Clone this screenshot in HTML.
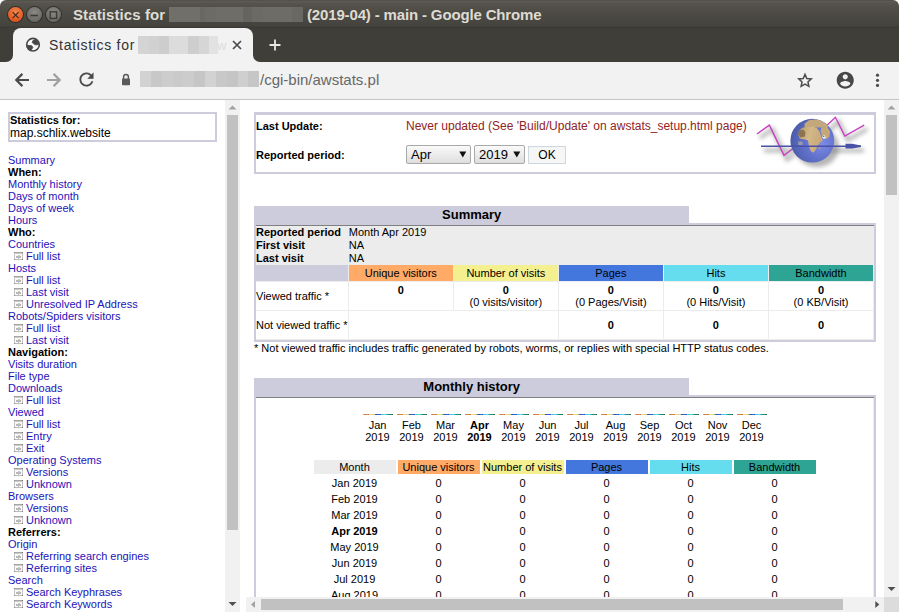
<!DOCTYPE html>
<html><head><meta charset="utf-8">
<style>
html,body{margin:0;padding:0;width:899px;height:612px;overflow:hidden;background:#fff;font-family:"Liberation Sans",sans-serif}
.abs{position:absolute}
.wb{width:15px;height:15px;border-radius:50%;box-shadow:0 0 0 1px #2f2e2a}
.ttl{font:bold 15px "Liberation Sans",sans-serif;color:#dfdbd2;letter-spacing:-0.15px;white-space:nowrap;line-height:18px}
.tabt{font:14px "Liberation Sans",sans-serif;color:#333333;letter-spacing:0.7px;white-space:nowrap;line-height:18px}
.urlt{font:15px "Liberation Sans",sans-serif;color:#676767;white-space:nowrap;line-height:18px}
#lframe{left:0;top:100px;width:225px;height:512px;overflow:hidden;background:#fff}
#mframe{left:246px;top:100px;width:638px;height:497px;overflow:hidden;background:#fff}
.sbt{background:#f1f1f1}
.thumb{background:#c1c1c1;position:absolute}
.aw{font:11px "Liberation Sans",sans-serif;color:#000}
.aw a{font:11px "Liberation Sans",sans-serif;color:#2412b8;text-decoration:none}
.aw table{font:11px "Liberation Sans",sans-serif}
.aws_border{border-collapse:collapse;background-color:#CCCCDD;padding:1px;margin:0}
.aws_title{font:bold 13px "Liberation Sans",sans-serif!important;background-color:#CCCCDD;text-align:center;padding:1px!important;color:#000}
.aws_blank{font:13px "Liberation Sans",sans-serif!important;background-color:#FFFFFF;text-align:center;padding:1px!important}
.aws_data{background-color:#FFFFFF;border-top-width:1px;border-left-width:0;border-right-width:0;border-bottom-width:0}
.aw td{border-color:#ECECEC;border-left-width:0;border-right-width:1px;border-top-width:0;border-bottom-width:1px;font:11px "Liberation Sans",sans-serif;text-align:center;color:#000}
.aw td.aws{text-align:left;padding:0}
.aw td.awsm{border-width:0;text-align:left;padding:0}
.sp{display:inline-block;width:6px}
.ic{display:inline-block;width:9px;height:8px;vertical-align:baseline;margin-right:3px}
.vu,.vv,.vp,.vh,.vk{display:inline-block;width:6px;height:1px;vertical-align:bottom}
.vu{background:linear-gradient(90deg,#f0a060,#d07030,#e09050,#c06020)}
.vv{background:linear-gradient(90deg,#f0f0a0,#d8d080,#e0e090,#c0b060)}
.vp{background:linear-gradient(90deg,#3070f0,#2050c0,#4070e0,#2040a0)}
.vh{background:linear-gradient(90deg,#50e0f0,#30c0d0,#60e0f0,#20b0c0)}
.vk{background:linear-gradient(90deg,#30b090,#208060,#209070,#106030)}
.sel{position:absolute;height:17px;border:1px solid #a9a9a9;border-radius:2px;background:linear-gradient(#fafafa,#dedede);font:13px "Liberation Sans",sans-serif;line-height:17px;color:#000}
.btn{position:absolute;height:16px;border:1px solid #ccd7e0;background:#f6f6f6;font:12px "Liberation Sans",sans-serif;line-height:16px;text-align:center;color:#000}

</style></head><body>
<svg width="0" height="0" style="position:absolute"><defs>
<g id="pg" shape-rendering="crispEdges"><rect x="0" y="0" width="9" height="8" fill="#c4c4c4"/><rect x="1" y="2" width="7" height="5" fill="#fafafa"/><rect x="1" y="0" width="7" height="1" fill="#a8a8a8"/><rect x="1" y="1" width="7" height="1" fill="#cacaca"/><rect x="0" y="0" width="1" height="1" fill="#8a8a8a"/><rect x="8" y="0" width="1" height="1" fill="#7a7a7a"/><rect x="0" y="7" width="1" height="1" fill="#909090"/><rect x="8" y="7" width="1" height="1" fill="#808080"/><rect x="1" y="7" width="7" height="1" fill="#bcbcbc"/><rect x="2" y="4" width="5" height="2" fill="#b8b8b8"/><rect x="4" y="3" width="2" height="1" fill="#c8c8c8"/><rect x="4" y="6" width="1" height="1" fill="#c8c8c8"/></g>
</defs></svg>
<div class="abs" style="left:0;top:0;width:899px;height:62px;background:linear-gradient(#4c4a45 0px,#5d5a53 1px,#5b5851 2px,#55524b 4px,#4c4a44 14px,#45433e 26px,#3b3a35 27px,#3b3a35 28px,#3f3e39 29px,#3f3e39 60px,#363531 61px);border-radius:6px 6px 0 0"></div>

<!-- window buttons -->
<div class="abs wb" style="left:8px;top:7px;background:radial-gradient(circle at 50% 35%,#f4884e,#e0561e 70%,#c94816);"></div>
<div class="abs wb" style="left:27px;top:7px;background:radial-gradient(circle at 50% 35%,#8a8984,#6b6a65 70%,#5c5b57);"></div>
<div class="abs wb" style="left:46px;top:7px;background:radial-gradient(circle at 50% 35%,#8a8984,#6b6a65 70%,#5c5b57);"></div>
<svg class="abs" style="left:0;top:1px" width="70" height="28">
<path d="M12.6 11.2 L18.6 17.2 M18.6 11.2 L12.6 17.2" stroke="#3a2a20" stroke-width="1.2"/>
<path d="M30.5 14.5 H38" stroke="#3c3b37" stroke-width="1.6"/>
<rect x="50.2" y="10.8" width="6.4" height="6.6" fill="none" stroke="#3c3b37" stroke-width="1.4"/>
</svg>
<div class="abs ttl" style="left:73px;top:6px;letter-spacing:0.1px">Statistics for</div>
<div class="abs" style="left:169px;top:7px;width:134px;height:15px;background:linear-gradient(90deg,#716f69 0px,#716f69 31px,#6a6863 31px,#6a6863 36px,#6d6b66 36px,#6d6b66 47px,#6f6d67 47px,#6f6d67 74px,#66645f 74px,#66645f 83px,#6c6a65 83px,#6c6a65 94px,#6e6c66 94px,#6e6c66 123px,#6a6862 123px,#6a6862 134px)"></div>
<div class="abs ttl" style="left:307px;top:6px">(2019-04) - main - Google Chrome</div>
<!-- tab -->
<div class="abs" style="left:6px;top:54px;width:254px;height:8px;background:#f2f2f2"></div>
<div class="abs" style="left:0;top:28px;width:13px;height:34px;background:#3f3e39;border-bottom-right-radius:7px"></div>
<div class="abs" style="left:253px;top:28px;width:646px;height:34px;background:#3f3e39;border-bottom-left-radius:7px"></div>
<div class="abs" style="left:0;top:62px;width:899px;height:1px;background:#fbfbfb"></div>
<div class="abs" style="left:13px;top:28px;width:240px;height:34px;background:#f2f2f2;border-radius:8px 8px 0 0"></div>
<svg class="abs" style="left:20px;top:32px" width="30" height="24" viewBox="20 32 30 24">
<circle cx="33" cy="44.7" r="6.3" fill="#fafafa" stroke="#474747" stroke-width="1.6"/>
<path d="M32.2,42.6 L32.9,40.6 L35.7,39.2 L38.6,41.8 L38.4,44.5 L35.7,44.9 L33.7,43.8Z" fill="#474747" stroke="#474747" stroke-width="0.8" stroke-linejoin="round"/>
<path d="M27.2,45.3 L31.8,45.7 L32.9,47.3 L31.8,49.3 L31,50.8 L28.6,49.8 L27,47.3Z" fill="#474747" stroke="#474747" stroke-width="0.8" stroke-linejoin="round"/>
</svg>
<div class="abs tabt" style="left:49px;top:36px">Statistics for</div>
<div class="abs" style="left:138px;top:36px;width:80px;height:18px;background:linear-gradient(90deg,#d4d4d4 0px,#d4d4d4 11px,#d1d1d1 11px,#d1d1d1 21px,#cdcdcd 21px,#cdcdcd 31px,#dcdcdc 31px,#dcdcdc 50px,#cecece 50px,#cecece 61px,#d6d6d6 61px,#d6d6d6 71px,#e2e2e2 71px,#e2e2e2 80px)"></div>
<div class="abs" style="left:217px;top:38px;font:13px 'Liberation Sans',sans-serif;color:#dcdcdc;line-height:16px">w</div>
<svg class="abs" style="left:230px;top:38px" width="14" height="14"><path d="M3 3 L11 11 M11 3 L3 11" stroke="#4a4a4a" stroke-width="1.7"/></svg>
<svg class="abs" style="left:268px;top:38px" width="14" height="14"><path d="M7 1.5 V12.5 M1.5 7 H12.5" stroke="#e8e8e4" stroke-width="1.8"/></svg>
<!-- toolbar -->
<div class="abs" style="left:0;top:62px;width:899px;height:37px;background:#f2f2f2"></div>
<div class="abs" style="left:0;top:99px;width:899px;height:1px;background:#c6c6c6"></div>
<svg class="abs" style="left:0;top:62px" width="100" height="37" viewBox="0 62 100 37">
<path d="M29 80 H16.6 M22.4 73.9 L16.3 80 L22.4 86.1" fill="none" stroke="#4a4a4a" stroke-width="2.2"/>
<path d="M47 80 H59.4 M53.6 73.9 L59.7 80 L53.6 86.1" fill="none" stroke="#a0a0a0" stroke-width="2.2"/>
</svg>
<svg class="abs" style="left:75.5px;top:69px" width="21" height="21" viewBox="0 0 24 24"><path fill="#4a4a4a" stroke="#4a4a4a" stroke-width="0.1" d="M17.65 6.35C16.2 4.9 14.21 4 12 4c-4.42 0-7.990 3.58-7.990 8s3.570 8 7.990 8c3.73 0 6.84-2.55 7.73-6h-2.08c-.82 2.33-3.04 4-5.65 4-3.31 0-6-2.690-6-6s2.690-6 6-6c1.66 0 3.14.69 4.22 1.78L13 11h7V4l-2.35 2.35z"/></svg>
<svg class="abs" style="left:0;top:62px" width="140" height="37">
<path d="M123.6 17 V14.8 A2.4 2.4 0 0 1 128.4 14.8 V17" fill="none" stroke="#5a5a5a" stroke-width="1.5"/>
<rect x="122" y="16.6" width="8" height="6.6" rx="0.8" fill="#5a5a5a"/>
</svg>
<div class="abs" style="left:140px;top:71px;width:119px;height:16px;background:linear-gradient(90deg,#d2d2d2 0px,#d2d2d2 11px,#c8c8c8 11px,#c8c8c8 22px,#cdcdcd 22px,#cdcdcd 33px,#cacaca 33px,#cacaca 43px,#cccccc 43px,#cccccc 54px,#c6c6c6 54px,#c6c6c6 65px,#d2d2d2 65px,#d2d2d2 76px,#c8c8c8 76px,#c8c8c8 87px,#c5c5c5 87px,#c5c5c5 98px,#cfcfcf 98px,#cfcfcf 108px,#c6c6c6 108px,#c6c6c6 119px)"></div>
<div class="abs urlt" style="left:260px;top:71px">/cgi-bin/awstats.pl</div>
<svg class="abs" style="left:790px;top:62px" width="100" height="37">
<path d="M15.00 12.35 L16.82 16.44 L21.28 16.91 L17.95 19.91 L18.88 24.29 L15.00 22.05 L11.12 24.29 L12.05 19.91 L8.72 16.91 L13.18 16.44Z" fill="none" stroke="#4d4d4d" stroke-width="1.5" stroke-linejoin="miter"/>
<circle cx="87.5" cy="13.2" r="1.6" fill="#4d4d4d"/>
<circle cx="87.5" cy="18.3" r="1.6" fill="#4d4d4d"/>
<circle cx="87.5" cy="23.4" r="1.6" fill="#4d4d4d"/>
</svg>
<svg class="abs" style="left:834.9px;top:69.6px" width="20.5" height="20.5" viewBox="0 0 24 24"><path fill="#474747" d="M12 2C6.48 2 2 6.48 2 12s4.48 10 10 10 10-4.48 10-10S17.52 2 12 2zm0 3c1.66 0 3 1.34 3 3s-1.34 3-3 3-3-1.34-3-3 1.34-3 3-3zm0 14.2c-2.5 0-4.71-1.28-6-3.22.03-1.99 4-3.08 6-3.08 1.99 0 5.97 1.09 6 3.08-1.29 1.94-3.5 3.22-6 3.22z"/></svg>

<div id="lframe" class="abs aw">
<div style="margin:12px 8px 0 8px">
<table class="aws_border" border="0" cellpadding="2" cellspacing="0" width="100%"><tr><td class="aws" style="background:#fff;padding:0;border:2px solid #ccccdd"><b>Statistics for:</b><br><span style="font-size:12px">map.schlix.website</span></td></tr></table>
<br>
<a>Summary</a><br>
<b>When:</b><br>
<a>Monthly history</a><br>
<a>Days of month</a><br>
<a>Days of week</a><br>
<a>Hours</a><br>
<b>Who:</b><br>
<a>Countries</a><br>
<span class="sp"></span><svg class="ic" width="9" height="8" viewBox="0 0 9 8"><use href="#pg"/></svg><a class="sa">Full list</a><br>
<a>Hosts</a><br>
<span class="sp"></span><svg class="ic" width="9" height="8" viewBox="0 0 9 8"><use href="#pg"/></svg><a class="sa">Full list</a><br>
<span class="sp"></span><svg class="ic" width="9" height="8" viewBox="0 0 9 8"><use href="#pg"/></svg><a class="sa">Last visit</a><br>
<span class="sp"></span><svg class="ic" width="9" height="8" viewBox="0 0 9 8"><use href="#pg"/></svg><a class="sa">Unresolved IP Address</a><br>
<a>Robots/Spiders visitors</a><br>
<span class="sp"></span><svg class="ic" width="9" height="8" viewBox="0 0 9 8"><use href="#pg"/></svg><a class="sa">Full list</a><br>
<span class="sp"></span><svg class="ic" width="9" height="8" viewBox="0 0 9 8"><use href="#pg"/></svg><a class="sa">Last visit</a><br>
<b>Navigation:</b><br>
<a>Visits duration</a><br>
<a>File type</a><br>
<a>Downloads</a><br>
<span class="sp"></span><svg class="ic" width="9" height="8" viewBox="0 0 9 8"><use href="#pg"/></svg><a class="sa">Full list</a><br>
<a>Viewed</a><br>
<span class="sp"></span><svg class="ic" width="9" height="8" viewBox="0 0 9 8"><use href="#pg"/></svg><a class="sa">Full list</a><br>
<span class="sp"></span><svg class="ic" width="9" height="8" viewBox="0 0 9 8"><use href="#pg"/></svg><a class="sa">Entry</a><br>
<span class="sp"></span><svg class="ic" width="9" height="8" viewBox="0 0 9 8"><use href="#pg"/></svg><a class="sa">Exit</a><br>
<a>Operating Systems</a><br>
<span class="sp"></span><svg class="ic" width="9" height="8" viewBox="0 0 9 8"><use href="#pg"/></svg><a class="sa">Versions</a><br>
<span class="sp"></span><svg class="ic" width="9" height="8" viewBox="0 0 9 8"><use href="#pg"/></svg><a class="sa">Unknown</a><br>
<a>Browsers</a><br>
<span class="sp"></span><svg class="ic" width="9" height="8" viewBox="0 0 9 8"><use href="#pg"/></svg><a class="sa">Versions</a><br>
<span class="sp"></span><svg class="ic" width="9" height="8" viewBox="0 0 9 8"><use href="#pg"/></svg><a class="sa">Unknown</a><br>
<b>Referrers:</b><br>
<a>Origin</a><br>
<span class="sp"></span><svg class="ic" width="9" height="8" viewBox="0 0 9 8"><use href="#pg"/></svg><a class="sa">Referring search engines</a><br>
<span class="sp"></span><svg class="ic" width="9" height="8" viewBox="0 0 9 8"><use href="#pg"/></svg><a class="sa">Referring sites</a><br>
<a>Search</a><br>
<span class="sp"></span><svg class="ic" width="9" height="8" viewBox="0 0 9 8"><use href="#pg"/></svg><a class="sa">Search Keyphrases</a><br>
<span class="sp"></span><svg class="ic" width="9" height="8" viewBox="0 0 9 8"><use href="#pg"/></svg><a class="sa">Search Keywords</a><br>
<b>Others:</b><br>
<a>Miscellaneous</a><br>
<a>HTTP Status codes</a><br>
<span class="sp"></span><svg class="ic" width="9" height="8" viewBox="0 0 9 8"><use href="#pg"/></svg><a class="sa">Pages not found</a><br>
</div>
</div>
<div class="abs sbt" style="left:225px;top:100px;width:15px;height:512px"></div>
<div class="thumb" style="left:227px;top:115px;width:11px;height:415px"></div>
<svg class="abs" style="left:225px;top:100px" width="15" height="512"><path d="M3.5 9.5 L7.5 5.5 L11.5 9.5Z" fill="#a3a3a3"/><path d="M3.5 502 L7.5 506 L11.5 502Z" fill="#505050"/></svg>

<div id="mframe" class="abs aw">
<div style="margin:0 8px">
<a>&nbsp;</a>
<form style="padding:0 0 20px 0;margin:0">
<table class="aws_border" border="0" cellpadding="2" cellspacing="0" width="100%">
<tr><td style="padding:3px 2px 2px 2px">
<table class="aws_data" border="0" cellpadding="1" cellspacing="0" width="100%">
<tr valign="middle"><td class="aws" valign="middle" width="150" style="height:22px"><b>Last Update:</b>&nbsp;</td><td class="aws" valign="middle"><span style="font-size:12px;color:#902424">Never updated (See 'Build/Update' on awstats_setup.html page)</span></td><td align="right" rowspan="2" style="width:120px"></td></tr>
<tr><td class="aws" valign="middle" style="height:35px"><b>Reported period:</b></td><td class="aws" valign="middle"></td></tr>
</table>
</td></tr></table>
</form>
<a>&nbsp;</a>
<table class="aws_border" border="0" cellpadding="2" cellspacing="0" width="100%">
<tr><td class="aws_title" width="70%">Summary </td><td class="aws_blank">&nbsp;</td></tr>
<tr><td colspan="2">
<table class="aws_data" border="1" cellpadding="2" cellspacing="0" width="100%">
<tr bgcolor="#ECECEC"><td class="aws"><b>Reported period</b></td><td class="aws" colspan="5">Month Apr 2019</td></tr>
<tr bgcolor="#ECECEC"><td class="aws"><b>First visit</b></td><td class="aws" colspan="5">NA</td></tr>
<tr bgcolor="#ECECEC"><td class="aws"><b>Last visit</b></td><td class="aws" colspan="5">NA</td></tr>
<tr><td bgcolor="#CCCCDD">&nbsp;</td><td width="17%" bgcolor="#FFAA66">Unique visitors</td><td width="17%" bgcolor="#F4F090">Number of visits</td><td width="17%" bgcolor="#4477DD">Pages</td><td width="17%" bgcolor="#66DDEE">Hits</td><td width="17%" bgcolor="#2EA495">Bandwidth</td></tr>
<tr><td class="aws">Viewed traffic&nbsp;*</td><td><b>0</b><br>&nbsp;</td><td><b>0</b><br>(0&nbsp;visits/visitor)</td><td><b>0</b><br>(0&nbsp;Pages/Visit)</td><td><b>0</b><br>(0&nbsp;Hits/Visit)</td><td><b>0</b><br>(0&nbsp;KB/Visit)</td></tr>
<tr><td class="aws">Not viewed traffic&nbsp;*</td><td colspan="2">&nbsp;<br>&nbsp;</td><td><b>0</b><br></td><td><b>0</b><br></td><td><b>0</b><br></td></tr>
</table></td></tr></table>
<span>* Not viewed traffic includes traffic generated by robots, worms, or replies with special HTTP status codes.</span><br>
<br>
<a>&nbsp;</a>
<table class="aws_border" border="0" cellpadding="2" cellspacing="0" width="100%">
<tr><td class="aws_title" width="70%">Monthly history </td><td class="aws_blank">&nbsp;</td></tr>
<tr><td colspan="2">
<table class="aws_data" border="1" cellpadding="2" cellspacing="0" width="100%">
<tr><td align="center">
<center>
<table>
<tr valign="bottom"><td>&nbsp;</td><td><i class="vu"></i><i class="vv"></i><i class="vp"></i><i class="vh"></i><i class="vk"></i></td><td><i class="vu"></i><i class="vv"></i><i class="vp"></i><i class="vh"></i><i class="vk"></i></td><td><i class="vu"></i><i class="vv"></i><i class="vp"></i><i class="vh"></i><i class="vk"></i></td><td><i class="vu"></i><i class="vv"></i><i class="vp"></i><i class="vh"></i><i class="vk"></i></td><td><i class="vu"></i><i class="vv"></i><i class="vp"></i><i class="vh"></i><i class="vk"></i></td><td><i class="vu"></i><i class="vv"></i><i class="vp"></i><i class="vh"></i><i class="vk"></i></td><td><i class="vu"></i><i class="vv"></i><i class="vp"></i><i class="vh"></i><i class="vk"></i></td><td><i class="vu"></i><i class="vv"></i><i class="vp"></i><i class="vh"></i><i class="vk"></i></td><td><i class="vu"></i><i class="vv"></i><i class="vp"></i><i class="vh"></i><i class="vk"></i></td><td><i class="vu"></i><i class="vv"></i><i class="vp"></i><i class="vh"></i><i class="vk"></i></td><td><i class="vu"></i><i class="vv"></i><i class="vp"></i><i class="vh"></i><i class="vk"></i></td><td><i class="vu"></i><i class="vv"></i><i class="vp"></i><i class="vh"></i><i class="vk"></i></td><td>&nbsp;</td></tr>
<tr valign="middle"><td>&nbsp;</td><td>Jan<br>2019</td><td>Feb<br>2019</td><td>Mar<br>2019</td><td><b>Apr<br>2019</b></td><td>May<br>2019</td><td>Jun<br>2019</td><td>Jul<br>2019</td><td>Aug<br>2019</td><td>Sep<br>2019</td><td>Oct<br>2019</td><td>Nov<br>2019</td><td>Dec<br>2019</td><td>&nbsp;</td></tr>
</table>
<br>
<table>
<tr><td width="80" bgcolor="#ECECEC">Month</td><td width="80" bgcolor="#FFAA66">Unique visitors</td><td width="80" bgcolor="#F4F090">Number of visits</td><td width="80" bgcolor="#4477DD">Pages</td><td width="80" bgcolor="#66DDEE">Hits</td><td width="80" bgcolor="#2EA495">Bandwidth</td></tr>
<tr><td>Jan 2019</td><td>0</td><td>0</td><td>0</td><td>0</td><td>0</td></tr><tr><td>Feb 2019</td><td>0</td><td>0</td><td>0</td><td>0</td><td>0</td></tr><tr><td>Mar 2019</td><td>0</td><td>0</td><td>0</td><td>0</td><td>0</td></tr><tr><td><b>Apr 2019</b></td><td>0</td><td>0</td><td>0</td><td>0</td><td>0</td></tr><tr><td>May 2019</td><td>0</td><td>0</td><td>0</td><td>0</td><td>0</td></tr><tr><td>Jun 2019</td><td>0</td><td>0</td><td>0</td><td>0</td><td>0</td></tr><tr><td>Jul 2019</td><td>0</td><td>0</td><td>0</td><td>0</td><td>0</td></tr><tr><td>Aug 2019</td><td>0</td><td>0</td><td>0</td><td>0</td><td>0</td></tr><tr><td>Sep 2019</td><td>0</td><td>0</td><td>0</td><td>0</td><td>0</td></tr><tr><td>Oct 2019</td><td>0</td><td>0</td><td>0</td><td>0</td><td>0</td></tr><tr><td>Nov 2019</td><td>0</td><td>0</td><td>0</td><td>0</td><td>0</td></tr><tr><td>Dec 2019</td><td>0</td><td>0</td><td>0</td><td>0</td><td>0</td></tr>
</table>
</center>
</td></tr></table></td></tr></table>
</div>
</div>
<!-- form controls -->
<div class="sel" style="left:406px;top:145px;width:63px"><span style="position:absolute;left:4px;top:0">Apr</span><svg style="position:absolute;left:52px;top:5px" width="8" height="7"><path d="M0.3 0.5 H7.3 L3.8 6.6Z" fill="#111"/></svg></div>
<div class="sel" style="left:474px;top:145px;width:49px"><span style="position:absolute;left:4px;top:0">2019</span><svg style="position:absolute;left:38px;top:5px" width="8" height="7"><path d="M0.3 0.5 H7.3 L3.8 6.6Z" fill="#111"/></svg></div>
<div class="btn" style="left:528px;top:146px;width:36px">OK</div>
<svg class="abs" style="left:750px;top:108px" width="120" height="66" viewBox="750 108 120 66">
<defs>
<filter id="bl" x="-30%" y="-30%" width="160%" height="160%"><feGaussianBlur stdDeviation="2"/></filter>
<radialGradient id="gg" cx="0.7" cy="0.55" r="0.8"><stop offset="0" stop-color="#7c8ce8"/><stop offset="0.45" stop-color="#6272cc"/><stop offset="0.8" stop-color="#5060b0"/><stop offset="1" stop-color="#44509a"/></radialGradient>
<linearGradient id="gl" x1="0" y1="0" x2="1" y2="0.3"><stop offset="0" stop-color="#b89868"/><stop offset="0.5" stop-color="#d4b888"/><stop offset="1" stop-color="#c8a878"/></linearGradient>
<clipPath id="gc"><circle cx="812.3" cy="140.7" r="21.9"/></clipPath>
</defs>
<g filter="url(#bl)" stroke="#8a8a8a" fill="none" stroke-width="4" opacity="0.6">
<polyline points="760,138 772.4,129.1 787,159.4 794,155"/>
<polyline points="829,131 838.4,121.3 847.8,140 867.2,129.1"/>
<line x1="764" y1="150.5" x2="864" y2="150.5"/>
</g>
<ellipse cx="817" cy="147" rx="22" ry="20" fill="#7a7a7a" opacity="0.55" filter="url(#bl)"/>
<polyline points="757,134 769.4,125.1 784,155.4 795,147" fill="none" stroke="#c840c0" stroke-width="1.4"/>
<polyline points="823,129 835.4,117.3 844.8,136 864.2,125.1" fill="none" stroke="#c840c0" stroke-width="1.4"/>
<circle cx="812.3" cy="140.7" r="21.9" fill="url(#gg)"/>
<g clip-path="url(#gc)">
<path d="M804.5,123.7 L808.9,120.2 L816,119.3 L823,121.1 L828.3,125.5 L827.4,128.1 L823,127.6 L816.9,127.6 L810.7,126.8 L804.5,127.6Z" fill="#c4a87c"/>
<path d="M804.5,127.2 L812.5,126.3 L816.9,128.1 L819.5,131.6 L821.3,136.9 L823,140.5 L820.4,142.2 L817.7,145.7 L816,149.3 L813.3,152.8 L810.7,151 L808.9,145.7 L808,140.5 L805.4,139.6 L800.1,138.7 L798.3,135.2 L799.2,130.8 L801.9,128.1Z" fill="url(#gl)"/>
<path d="M798.6,130.5 L803,129.5 L805.4,132 L805,136.5 L800.5,137.5 L798.4,135Z" fill="#8c7452"/>
<path d="M821.3,127.2 L827.4,127.2 L830.1,131.6 L829.2,136.9 L825.7,139.6 L822.2,136 L820.6,131.6Z" fill="#c4a878"/>
<ellipse cx="819.6" cy="148" rx="1" ry="1.8" fill="#b89870"/>
<path d="M798.3,141.5 L802.6,141.5 L802.6,145 L798.3,145Z" fill="#9a9aae"/>
</g>
<circle cx="824" cy="137" r="1.7" fill="#f4f4f4"/>
<circle cx="823.8" cy="136.4" r="0.7" fill="#606060"/>
<line x1="761" y1="146.2" x2="861" y2="146.2" stroke="#4a52a8" stroke-width="1.5"/>
<path d="M845.5 143.8 H852 L861 145.5 V146.9 L852 148.6 H845.5Z" fill="#4a52a8"/>
</svg>

<div class="abs sbt" style="left:884px;top:100px;width:15px;height:497px"></div>
<div class="thumb" style="left:886px;top:115px;width:11px;height:80px"></div>
<div class="abs sbt" style="left:246px;top:597px;width:638px;height:15px"></div>
<div class="thumb" style="left:261px;top:599px;width:582px;height:11px"></div>
<div class="abs" style="left:884px;top:597px;width:15px;height:15px;background:#dcdcdc"></div>
<svg class="abs" style="left:246px;top:100px" width="653" height="512">
<path d="M641.5 9.5 L645.5 5.5 L649.5 9.5Z" fill="#a3a3a3"/>
<path d="M641.5 487 L645.5 491 L649.5 487Z" fill="#505050"/>
<path d="M9 501 L5 504.5 L9 508Z" fill="#a3a3a3"/>
<path d="M629.3 501 L633.3 504.5 L629.3 508Z" fill="#505050"/>
</svg>

</body></html>
